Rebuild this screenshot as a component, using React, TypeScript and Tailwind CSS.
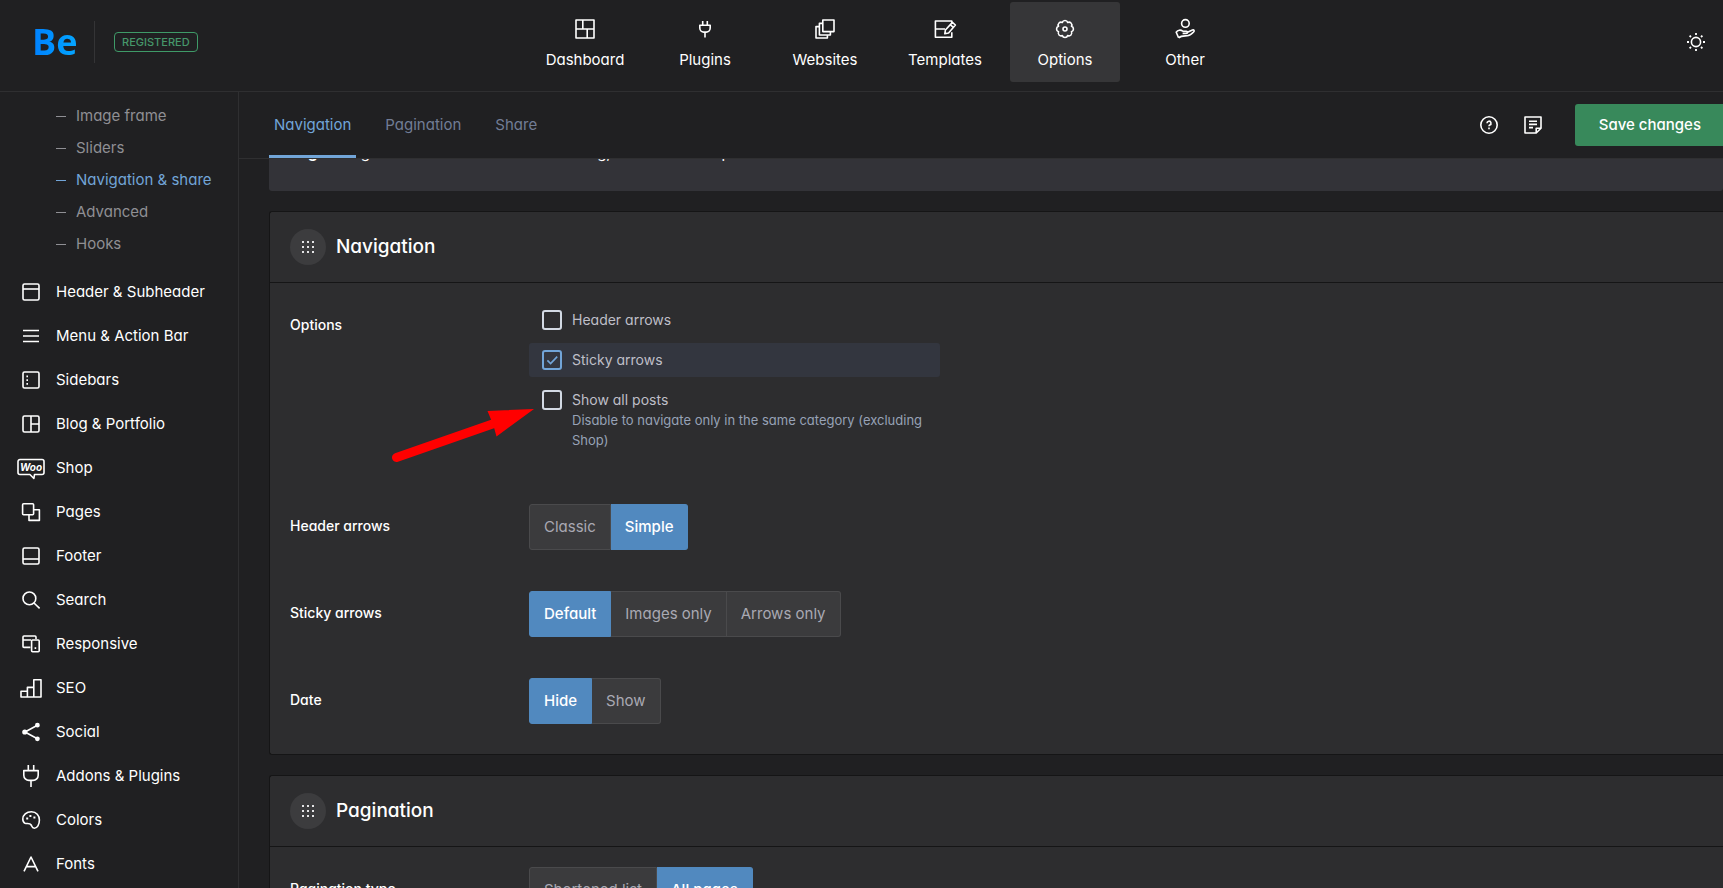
import React, { useState } from 'react';

interface IconProps {
  className?: string;
  children: React.ReactNode;
}

const Icon: React.FC<IconProps> = ({ className = 'w-6 h-6', children }) => (
  <svg
    viewBox="0 0 24 24"
    className={className}
    fill="none"
    stroke="currentColor"
    strokeWidth="1.6"
    strokeLinejoin="round"
    aria-hidden="true"
  >
    {children}
  </svg>
);

const topNav = [
  {
    label: 'Dashboard',
    icon: (
      <Icon>
        <path d="M3 3h18v18H3zM3 12h18M9.8 3v9M14.2 12v9" />
      </Icon>
    ),
  },
  {
    label: 'Plugins',
    icon: (
      <Icon>
        <path d="M9.7 4v4.2M14.3 4v4.2M12 15.2v5.2" />
        <path d="M6.8 8.2h10.4v2.9a4 4 0 0 1-4 4h-2.4a4 4 0 0 1-4-4z" />
      </Icon>
    ),
  },
  {
    label: 'Websites',
    icon: (
      <Icon>
        <path d="M9.8 3H21v11.6H9.8z" />
        <path d="M9.6 6.4H6.4V18h11v-3.2" />
        <path d="M6.2 9.6H3V21h11.4v-2.8" />
      </Icon>
    ),
  },
  {
    label: 'Templates',
    icon: (
      <Icon>
        <path d="M18.8 15.2v5H2.4V4h16.4v2M2.4 12H12" />
        <path d="M19.4 5.4l3 2.6-6.8 8-3.8.8.6-3.8z" />
        <path d="M17.4 7.8l3 2.6" />
      </Icon>
    ),
  },
  {
    label: 'Options',
    icon: (
      <Icon>
        <circle cx="12" cy="12" r="2" />
        <path d="M9.32 5.53A2.8 2.8 0 0 1 14.68 5.53A2.8 2.8 0 0 1 18.47 9.32A2.8 2.8 0 0 1 18.47 14.68A2.8 2.8 0 0 1 14.68 18.47A2.8 2.8 0 0 1 9.32 18.47A2.8 2.8 0 0 1 5.53 14.68A2.8 2.8 0 0 1 5.53 9.32A2.8 2.8 0 0 1 9.32 5.53z" />
      </Icon>
    ),
  },
  {
    label: 'Other',
    icon: (
      <Icon>
        <circle cx="12.4" cy="6.4" r="3.8" />
        <path d="M5.6 20.8l-2.4-5.6c1.6-2.4 4.4-2.6 6.6-1h3.6c1.4 0 1.4 2.2 0 2.2H9.6" />
        <path d="M14 15.4l5.4-2.4c1.6-.6 2.4.8 1.2 2-2.2 2.2-4 3.6-6.4 3.8-2.8.2-6-.4-8.6 2" />
      </Icon>
    ),
  },
];

const subItems = ['Image frame', 'Sliders', 'Navigation & share', 'Advanced', 'Hooks'];

const sideItems = [
  {
    label: 'Header & Subheader',
    icon: (
      <Icon>
        <rect x="4" y="4" width="16" height="16" rx="1.5" />
        <path d="M4 9h16" />
      </Icon>
    ),
  },
  {
    label: 'Menu & Action Bar',
    icon: (
      <Icon>
        <path d="M4 6.500h16M4 12h16M4 17.500h16" />
      </Icon>
    ),
  },
  {
    label: 'Sidebars',
    icon: (
      <Icon>
        <rect x="4" y="4" width="16" height="16" rx="1.5" />
        <path d="M8.2 7.4v9.4" strokeDasharray="1.8 2" />
      </Icon>
    ),
  },
  {
    label: 'Blog & Portfolio',
    icon: (
      <Icon>
        <rect x="4" y="4" width="16" height="16" rx="1.5" />
        <path d="M12 4v16M12 12h8" />
      </Icon>
    ),
  },
  {
    label: 'Shop',
    icon: (
      <svg
        viewBox="0 0 28 24"
        className="h-6 w-7"
        fill="none"
        stroke="currentColor"
        strokeWidth="1.6"
        strokeLinejoin="round"
        aria-hidden="true"
      >
        <path d="M3 3.5h22a2 2 0 0 1 2 2v11a2 2 0 0 1-2 2h-7.5l-.6 4-4-4H3a2 2 0 0 1-2-2v-11a2 2 0 0 1 2-2z" />
        <text x="14" y="14.5" textAnchor="middle" fill="currentColor" stroke="none" className="text-[10px] font-bold italic">
          Woo
        </text>
      </svg>
    ),
  },
  {
    label: 'Pages',
    icon: (
      <Icon>
        <rect x="3.6" y="3.8" width="11" height="11" rx="1" />
        <path d="M14.8 9.8h5.6v10.6H10V15" />
      </Icon>
    ),
  },
  {
    label: 'Footer',
    icon: (
      <Icon>
        <rect x="4" y="4" width="16" height="16" rx="1.5" />
        <path d="M4 15h16" />
      </Icon>
    ),
  },
  {
    label: 'Search',
    icon: (
      <Icon>
        <circle cx="10.4" cy="10.4" r="6.4" />
        <path d="M15 15l5.6 5.4" />
      </Icon>
    ),
  },
  {
    label: 'Responsive',
    icon: (
      <Icon>
        <path d="M17 7V5a1 1 0 0 0-1-1H5a1 1 0 0 0-1 1v9.4a1 1 0 0 0 1 1h6.4M4 8h8" />
        <rect x="12.6" y="8" width="7.6" height="11.8" rx="1" />
        <path d="M16.4 15.2v1.8" />
      </Icon>
    ),
  },
  {
    label: 'SEO',
    icon: (
      <Icon>
        <path d="M2 21v-5.8h6.4V21zM8.4 21v-9.6h6.4V21zM14.8 21V3.8H22V21z" />
      </Icon>
    ),
  },
  {
    label: 'Social',
    icon: (
      <Icon>
        <path d="M18.4 5.2L6 12l12.4 6.8" />
        <circle cx="5.8" cy="12" r="1.8" fill="currentColor" />
        <circle cx="18.4" cy="5.2" r="1.6" fill="currentColor" />
        <circle cx="18.4" cy="18.8" r="1.6" fill="currentColor" />
      </Icon>
    ),
  },
  {
    label: 'Addons & Plugins',
    icon: (
      <Icon>
        <path d="M9.3 1v5.6M14.7 1v5.6M12 16.4V23" />
        <path d="M4.8 6.6h14.4v4.6a5.2 5.2 0 0 1-5.2 5.2h-4a5.2 5.2 0 0 1-5.2-5.2z" />
      </Icon>
    ),
  },
  {
    label: 'Colors',
    icon: (
      <Icon>
        <path d="M12.4 3.8c5 0 8 3.6 8 8.2 0 4.8-2.2 8.2-5 8.2-2.6 0-2.4-1.8-3.2-3.2-1.4-2.4-4-1-6.2-1.8-1.4-.6-2.2-2.2-2.2-4.2 0-4 3.6-7.2 8.6-7.2z" />
        <path d="M7.2 10.4h2M10.4 8h2M14.4 9.4h2" strokeWidth="2" />
      </Icon>
    ),
  },
  {
    label: 'Fonts',
    icon: (
      <Icon>
        <path d="M5 19.4L12 5l7 14.4M7.6 14.6h8.8" />
      </Icon>
    ),
  },
];

const tabs = ['Navigation', 'Pagination', 'Share'];

const Segmented: React.FC<{ label: string; options: string[]; initial: string }> = ({ label, options, initial }) => {
  const [value, setValue] = useState(initial);

  return (
    <div className="flex">
      <div className="w-[239px] shrink-0 text-sm leading-[44px] font-medium text-white">{label}</div>
      <div className="flex" role="group" aria-label={label}>
        {options.map((option) => (
          <button
            key={option}
            type="button"
            aria-pressed={value === option}
            onClick={() => setValue(option)}
            className={`h-[46px] border-y border-r px-3.5 first:rounded-l-[3px] first:border-l last:rounded-r-[3px] ${
              value === option
                ? 'border-[#5189bf] bg-[#5189bf] font-medium text-white'
                : 'border-[#4a4a4c] bg-[#3b3b3d] text-[#a9a9b3]'
            }`}
          >
            {option}
          </button>
        ))}
      </div>
    </div>
  );
};

const CheckItem: React.FC<{ label: string; desc?: string; initial?: boolean }> = ({ label, desc, initial = false }) => {
  const [checked, setChecked] = useState(initial);

  return (
    <li className={`mb-1.5 rounded-[3px] ${checked ? 'bg-[#33363f]' : ''}`}>
      <label className="flex gap-2.5 py-[7px] pr-2 pl-[13px]">
        <span className="grid h-5 w-5 shrink-0">
          <input
            type="checkbox"
            checked={checked}
            onChange={(e) => setChecked(e.target.checked)}
            className="col-start-1 row-start-1 h-5 w-5 appearance-none rounded-[3px] border-2 border-[#d3dae4] checked:border-[#72a5d8]"
          />
          {checked && (
            <svg
              viewBox="0 0 20 20"
              className="pointer-events-none col-start-1 row-start-1 h-5 w-5 text-[#72a5d8]"
              fill="none"
              stroke="currentColor"
              strokeWidth="1.6"
              aria-hidden="true"
            >
              <path d="M5.4 10.4l3.2 3.2 6.6-7" />
            </svg>
          )}
        </span>
        <span className="text-sm leading-5 text-[#bfbfc8]">
          {label}
          {desc && <span className="block text-[13px] leading-5 text-[#97a2b6]">{desc}</span>}
        </span>
      </label>
    </li>
  );
};

const Card: React.FC<{ title: string; children: React.ReactNode }> = ({ title, children }) => (
  <section className="mt-5 shrink-0 rounded-l-[3px] border-y border-l border-[#151516] bg-[#2d2d2f]">
    <div className="flex h-[71px] items-center gap-2.5 border-b border-[#151516] px-5">
      <span className="grid h-9 w-9 place-items-center rounded-full bg-[#3c3c3e]">
        <svg viewBox="0 0 12 12" className="h-3 w-3 fill-[#e4e4e6]" aria-hidden="true">
          {[0, 5, 10].map((y) => [0, 5, 10].map((x) => <rect key={`${x}-${y}`} x={x} y={y} width="2" height="2" />))}
        </svg>
      </span>
      <h2 className="text-[19px] font-medium text-white">{title}</h2>
    </div>
    <div className="flex flex-col gap-[41px] px-5 pt-5 pb-[30px]">{children}</div>
  </section>
);

const App: React.FC = () => {
  const [tab, setTab] = useState('Navigation');

  return (
    <div className="flex h-screen flex-col overflow-hidden bg-[#202022] font-['Inter',sans-serif] text-[15px] text-white [font-feature-settings:'cv11']">
      <header className="flex h-[92px] shrink-0 items-start border-b border-[#2f2f31]">
        <div className="flex h-[84px] w-[530px] shrink-0 items-center pl-8">
          <a
            href="#"
            className="w-[62px] bg-linear-to-r from-[#0080ff] to-[#06a4ff] to-70% bg-clip-text font-['Open_Sans',sans-serif] text-4xl font-bold text-transparent"
          >
            Be
          </a>
          <span className="h-[42px] w-px bg-[#343436]"></span>
          <span className="ml-[19px] rounded border border-[#3f9a68] px-[7px] text-[11px] leading-[18px] font-medium text-[#46976a]">
            REGISTERED
          </span>
        </div>
        <nav className="flex gap-2.5 pt-0.5">
          {topNav.map((item) => (
            <a
              key={item.label}
              href="#"
              className={`flex h-20 w-[110px] flex-col items-center gap-[9px] rounded-[3px] pt-[15px] ${
                item.label === 'Options' ? 'bg-[#363638]' : ''
              }`}
            >
              {item.icon}
              <span className="leading-5">{item.label}</span>
            </a>
          ))}
        </nav>
        <button type="button" aria-label="Toggle theme" className="mt-[30px] mr-[15px] ml-auto">
          <Icon>
            <circle cx="12" cy="12" r="4.6" />
            <path
              d="M12 3v2M12 19v2M3 12h2M19 12h2M5.6 5.6L7 7M17 17l1.4 1.4M18.4 5.6L17 7M7 17l-1.4 1.4"
              strokeWidth="1.8"
            />
          </Icon>
        </button>
      </header>

      <div className="flex min-h-0 flex-1">
        <aside className="w-[239px] shrink-0 overflow-hidden border-r border-[#2f2f31] pt-2">
          <ul className="mb-2.5">
            {subItems.map((item) => (
              <li key={item}>
                <a
                  href="#"
                  className={`flex h-8 items-center gap-2.5 pl-14 ${
                    item === 'Navigation & share' ? 'text-[#72a5d8]' : 'text-[#8f8f94]'
                  }`}
                >
                  <span className="h-px w-2.5 bg-current"></span>
                  {item}
                </a>
              </li>
            ))}
          </ul>
          <ul>
            {sideItems.map((item) => (
              <li key={item.label}>
                <a href="#" className="flex h-11 items-center gap-[9px] pl-[15px]">
                  <span className="flex w-8 justify-center">{item.icon}</span>
                  {item.label}
                </a>
              </li>
            ))}
          </ul>
        </aside>

        <main className="flex min-w-0 flex-1 flex-col">
          <div className="flex h-[67px] shrink-0 items-center border-b border-[#2f2f31] pl-[30px]">
            <div className="flex gap-6 self-stretch">
              {tabs.map((item) => (
                <button
                  key={item}
                  type="button"
                  onClick={() => setTab(item)}
                  className={`rounded-t-[2px] border-b-[3px] px-[5px] pt-[3px] ${
                    tab === item ? 'border-[#72a5d8] text-[#72a5d8]' : 'border-transparent text-[#727d96]'
                  }`}
                >
                  {item}
                </button>
              ))}
            </div>
            <div className="ml-auto flex items-center">
              <button type="button" aria-label="Help" className="mr-5">
                <Icon>
                  <circle cx="12" cy="12" r="8.2" />
                  <path d="M10 10.2a2 2 0 1 1 2.8 1.8c-.6.3-.8.6-.8 1.3M12 14.6v1.6" />
                </Icon>
              </button>
              <button type="button" aria-label="Notes" className="mr-[30px]">
                <Icon>
                  <path d="M4 4h16v11.2L15.2 20H4zM15.2 20v-4.8H20M8 8.2h8M8 11.4h8M8 14.6h4" />
                </Icon>
              </button>
              <button
                type="button"
                className="h-[42px] rounded-l-[3px] bg-[#38895b] pr-[22px] pl-6 font-medium text-white"
              >
                Save changes
              </button>
            </div>
          </div>

          <div className="flex min-h-0 flex-1 flex-col overflow-hidden pl-[30px]">
            {/* scrolled notice, only its bottom part stays visible */}
            <div className="-mt-[36px] shrink-0 rounded-[3px] bg-[#333338] px-5 pt-5 pb-7">
              <p className="leading-5">
                <strong>Page</strong> navigation is used for items in our blog, but it is not for portfolio
              </p>
            </div>

            <Card title="Navigation">
              <div className="flex">
                <div className="w-[239px] shrink-0 text-sm leading-[44px] font-medium">Options</div>
                <div className="relative w-[411px]">
                  <ul>
                    <CheckItem label="Header arrows" />
                    <CheckItem label="Sticky arrows" initial />
                    <CheckItem
                      label="Show all posts"
                      desc="Disable to navigate only in the same category (excluding Shop)"
                    />
                  </ul>
                  {/* pointer to "Show all posts" */}
                  <svg
                    viewBox="0 0 145 58"
                    className="pointer-events-none absolute top-[102px] left-[-139px] h-[58px] w-[145px]"
                    aria-hidden="true"
                  >
                    <path d="M6.5 52.5L104 18.5" stroke="#ff0000" strokeWidth="9" strokeLinecap="round" />
                    <path d="M144 4L97.5 6l3.5 8.5 3 8 2.5 9z" fill="#ff0000" />
                  </svg>
                </div>
              </div>
              <Segmented label="Header arrows" options={['Classic', 'Simple']} initial="Simple" />
              <Segmented label="Sticky arrows" options={['Default', 'Images only', 'Arrows only']} initial="Default" />
              <Segmented label="Date" options={['Hide', 'Show']} initial="Hide" />
            </Card>

            <Card title="Pagination">
              <Segmented label="Pagination type" options={['Shortened list', 'All pages']} initial="All pages" />
            </Card>
          </div>
        </main>
      </div>
    </div>
  );
};

export default App;
